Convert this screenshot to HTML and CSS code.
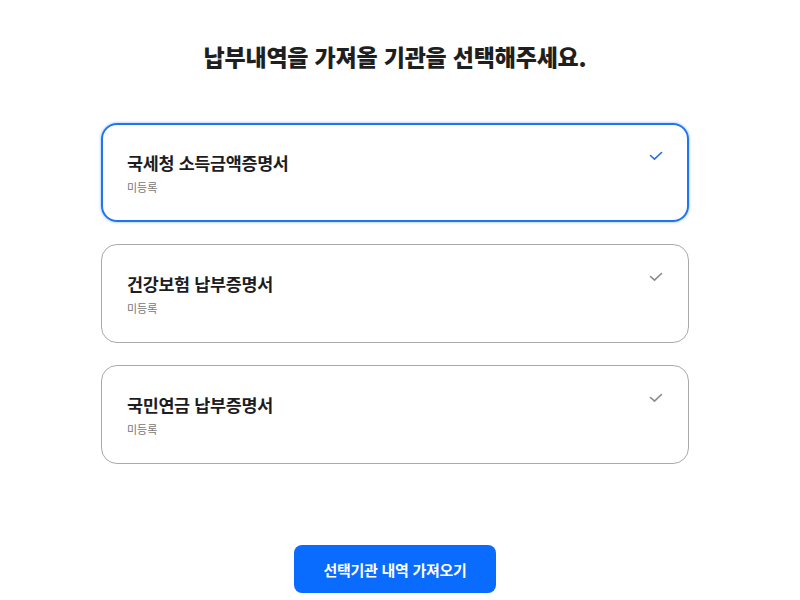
FILE: index.html
```html
<!DOCTYPE html>
<html lang="ko">
<head>
<meta charset="utf-8">
<link rel="stylesheet" href="styles.css">
</head>
<body>
<main class="page">
  <h1 class="title">납부내역을 가져올 기관을 선택해주세요.</h1>
  <ul class="list">
    <li class="card selected">
      <div class="card-text">
        <div class="card-title">국세청 소득금액증명서</div>
        <div class="card-sub">미등록</div>
      </div>
      <svg class="check" viewBox="0 0 14 10" width="14" height="10"><path d="M1.5 4.5 L5.5 8.2 L12.5 1.5" fill="none" stroke="currentColor" stroke-width="1.6" stroke-linecap="round" stroke-linejoin="round"/></svg>
    </li>
    <li class="card">
      <div class="card-text">
        <div class="card-title">건강보험 납부증명서</div>
        <div class="card-sub">미등록</div>
      </div>
      <svg class="check" viewBox="0 0 14 10" width="14" height="10"><path d="M1.5 4.5 L5.5 8.2 L12.5 1.5" fill="none" stroke="currentColor" stroke-width="1.6" stroke-linecap="round" stroke-linejoin="round"/></svg>
    </li>
    <li class="card">
      <div class="card-text">
        <div class="card-title">국민연금 납부증명서</div>
        <div class="card-sub">미등록</div>
      </div>
      <svg class="check" viewBox="0 0 14 10" width="14" height="10"><path d="M1.5 4.5 L5.5 8.2 L12.5 1.5" fill="none" stroke="currentColor" stroke-width="1.6" stroke-linecap="round" stroke-linejoin="round"/></svg>
    </li>
  </ul>
  <div class="actions">
    <button class="primary" type="button">선택기관 내역 가져오기</button>
  </div>
</main>
</body>
</html>
```

FILE: styles.css
```css
* { box-sizing: border-box; }
html, body { margin: 0; padding: 0; background: #fff; }
body {
  font-family: "Noto Sans CJK KR", "Noto Sans", sans-serif;
  color: #1d1d1f;
}
.page {
  width: 790px;
  display: flex;
  flex-direction: column;
  align-items: center;
  padding-top: 37px;
}
.title {
  margin: 0;
  font-size: 23px;
  font-weight: 800;
  line-height: 38px;
  letter-spacing: -0.2px;
  color: #1f1f1f;
}
.list {
  list-style: none;
  margin: 48px 0 0;
  padding: 0;
  width: 588px;
  display: flex;
  flex-direction: column;
  gap: 22px;
}
.card {
  height: 99px;
  border: 1px solid #a9a9a9;
  border-radius: 16px;
  display: flex;
  justify-content: space-between;
  align-items: flex-start;
  padding: 26px 25px 0 25px;
  color: #8a8a8a;
}
.card.selected {
  border: 2px solid #1f74ef;
  box-shadow: 0 0 3px rgba(31, 116, 239, 0.55);
  padding: 25px 24px 0 24px;
  color: #2a6fd8;
}
.card-title {
  font-size: 17.4px;
  font-weight: 700;
  line-height: 26px;
  color: #1d1d1f;
  letter-spacing: -0.3px;
}
.card-sub {
  margin-top: 4px;
  font-size: 11px;
  line-height: 14px;
  color: #777;
}
.check {
  margin-top: 1px;
  display: block;
}
.actions {
  margin-top: 81px;
  display: flex;
  justify-content: center;
}
.primary {
  width: 202px;
  height: 48px;
  border: 0;
  border-radius: 8px;
  background: #0a6cff;
  color: #fff;
  font-family: inherit;
  font-size: 15px;
  font-weight: 700;
  letter-spacing: -0.3px;
}
```
